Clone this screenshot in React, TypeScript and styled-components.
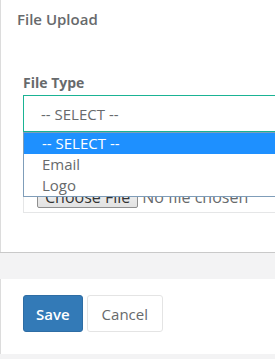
import React from "react";
import styled, { createGlobalStyle } from "styled-components";

const Global = createGlobalStyle`
  html, body { margin: 0; padding: 0; overflow: hidden; }
  body {
    background: #f3f3f4;
    font-family: "Open Sans", "Noto Sans", Arial, sans-serif;
    color: #676a6c;
  }
`;

const Page = styled.div`
  display: flex;
  flex-direction: column;
  gap: 27px;
  width: 320px;
`;

const Card = styled.section<{ $pt: number; $pb: number }>`
  background: #ffffff;
  border-left: 1px solid #dcdcdc;
  box-shadow: 0 1px 0 #c9c9c9;
  padding: ${(p) => p.$pt}px 0 ${(p) => p.$pb}px 22px;
  display: flex;
  flex-direction: column;
`;

const Title = styled.h5`
  margin: 0 0 45px -6px;
  font-size: 15px;
  font-weight: 600;
  line-height: 20px;
  color: #676a6c;
`;

const FormGroup = styled.div`
  display: flex;
  flex-direction: column;
`;

const Label = styled.label`
  font-size: 14px;
  font-weight: 700;
  line-height: 18px;
  margin-bottom: 3px;
  color: #676a6c;
`;

const SelectWrap = styled.div`
  position: relative;
`;

const SelectBox = styled.div`
  height: 35px;
  border: 1px solid #1ab394;
  background: #ffffff;
  display: flex;
  align-items: center;
  padding: 0 17px;
  font-size: 15px;
  color: #676a6c;
`;

const Dropdown = styled.ul`
  position: absolute;
  top: 100%;
  left: 0;
  right: 0;
  margin: 0;
  padding: 0;
  list-style: none;
  background: #ffffff;
  border: 1px solid #7f9db9;
  z-index: 5;
`;

const Option = styled.li<{ $active?: boolean }>`
  height: 21px;
  line-height: 21px;
  padding: 0 18px;
  font-size: 15px;
  background: ${(p) => (p.$active ? "#1e90ff" : "#ffffff")};
  color: ${(p) => (p.$active ? "#ffffff" : "#676a6c")};
`;

const FileBox = styled.div`
  margin-top: 43px;
  border: 1px solid #e5e6e7;
  padding: 10px 13px 4px;
  display: flex;
  align-items: center;
  gap: 4px;
`;

const FileButton = styled.span`
  display: inline-flex;
  align-items: center;
  height: 20px;
  padding: 0 7px;
  border: 1px solid #8f8f8f;
  border-radius: 2px;
  background: linear-gradient(#f4f4f4, #e2e2e2);
  font-size: 16px;
  color: #333;
`;

const FileText = styled.span`
  font-size: 16px;
  color: #676a6c;
`;

const Actions = styled.div`
  display: flex;
  gap: 4px;
`;

const Button = styled.button<{ $primary?: boolean }>`
  height: 37px;
  padding: 0 ${(p) => (p.$primary ? 12 : 14)}px;
  border-radius: 3px;
  font-family: "Open Sans", Arial, sans-serif;
  font-size: 15px;
  font-weight: ${(p) => (p.$primary ? 600 : 400)};
  border: 1px solid ${(p) => (p.$primary ? "#2e6da4" : "#e4e4e4")};
  background: ${(p) => (p.$primary ? "#337ab7" : "#ffffff")};
  color: ${(p) => (p.$primary ? "#ffffff" : "#676a6c")};
`;

export default function App() {
  return (
    <>
      <Global />
      <Page>
        <Card $pt={9} $pb={39}>
          <Title>File Upload</Title>
          <FormGroup>
            <Label>File Type</Label>
            <SelectWrap>
              <SelectBox>-- SELECT --</SelectBox>
              <Dropdown>
                <Option $active>-- SELECT --</Option>
                <Option>Email</Option>
                <Option>Logo</Option>
              </Dropdown>
            </SelectWrap>
            <FileBox>
              <FileButton>Choose File</FileButton>
              <FileText>No file chosen</FileText>
            </FileBox>
          </FormGroup>
        </Card>
        <Card $pt={16} $pb={22}>
          <Actions>
            <Button $primary>Save</Button>
            <Button>Cancel</Button>
          </Actions>
        </Card>
      </Page>
    </>
  );
}
